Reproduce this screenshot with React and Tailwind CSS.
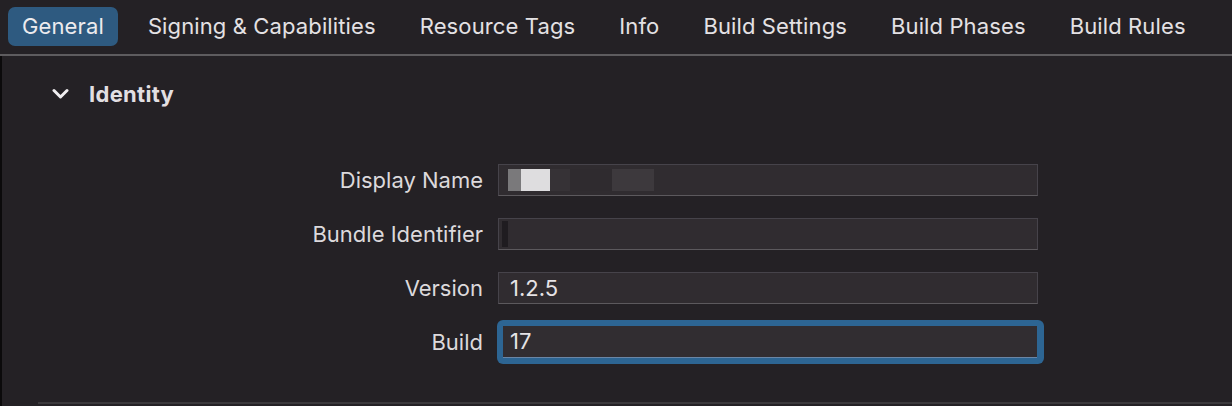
const TABS = ['General', 'Signing & Capabilities', 'Resource Tags', 'Info', 'Build Settings', 'Build Phases', 'Build Rules'];

function Field({ label, children, focused }) {
  return (
    <div className="flex items-center h-[32px]">
      <div className="w-[483px] text-right text-[22px] text-[#dcd9dc]">{label}</div>
      {focused ? (
        <div className="ml-[14px] -my-[6px] h-[44px] w-[547px] rounded-[6px] bg-[#2d6593] p-[6px] pr-[7px]">
          <div className="h-full w-full bg-[#312d31] border-b border-[#6a86a6] flex items-center pl-[7px] text-[22px] text-[#e6e3e6]">
            {children}
          </div>
        </div>
      ) : (
        <div className="ml-[15px] h-[32px] w-[540px] bg-[#302c30] border border-[#46434a] border-b-[#5c595d] flex items-center pl-[11px] text-[22px] text-[#e6e3e6]">
          {children}
        </div>
      )}
    </div>
  );
}

export default function App() {
  return (
    <div className="w-[1232px] h-[406px] bg-[#242125] overflow-hidden" style={{ fontFamily: 'Inter, "Liberation Sans", sans-serif' }}>
      {/* tab bar */}
      <div className="h-[56px] border-b-2 border-[#5e5c5f] flex items-center pl-[8px] gap-4 pb-[5px] pt-[3px]">
        {TABS.map((t, i) => (
          <div
            key={t}
            className={`h-[39px] px-[14px] flex items-center rounded-[7px] text-[22px] tracking-[0.12px] ${i === 0 ? 'bg-[#2e5a80] text-[#ecebee]' : 'text-[#e4e1e4]'}`}
          >
            {t}
          </div>
        ))}
      </div>

      <div className="flex h-[350px]">
        <div className="w-[2px] bg-[#0b0a0b]" />
        <div className="flex-1 flex flex-col">
          {/* section header */}
          <div className="flex items-center h-[32px] mt-[22px] pl-[50px] gap-[20px]">
            <svg width="17" height="12" viewBox="0 0 17 12" fill="none">
              <path d="M2 2.5 L8.5 9 L15 2.5" stroke="#f0eef0" strokeWidth="3" strokeLinecap="round" strokeLinejoin="round" />
            </svg>
            <span className="text-[22px] font-bold tracking-[0.3px] text-[#e2dfe2]">Identity</span>
          </div>

          <div className="flex flex-col gap-[22px] mt-[54px] -ml-[2px]">
            <Field label="Display Name">
              <div className="flex items-center h-[22px] -ml-[2px]">
                <div className="w-[13px] h-full bg-[#7a797b]" />
                <div className="w-[29px] h-full bg-[#dedddf]" />
                <div className="w-[20px] h-full bg-[#363236]" />
                <div className="w-[42px] h-full bg-[#2f2b2f]" />
                <div className="w-[42px] h-full bg-[#3d393d]" />
              </div>
            </Field>
            <Field label="Bundle Identifier">
              <div className="w-[6px] h-[26px] -ml-[8px] bg-[#1f1c20]" />
            </Field>
            <Field label="Version">1.2.5</Field>
            <Field label="Build" focused>17</Field>
          </div>

          <div className="mt-auto mb-[2px] ml-[36px] h-[2px] bg-[#3b393c]" />
        </div>
      </div>
    </div>
  );
}
